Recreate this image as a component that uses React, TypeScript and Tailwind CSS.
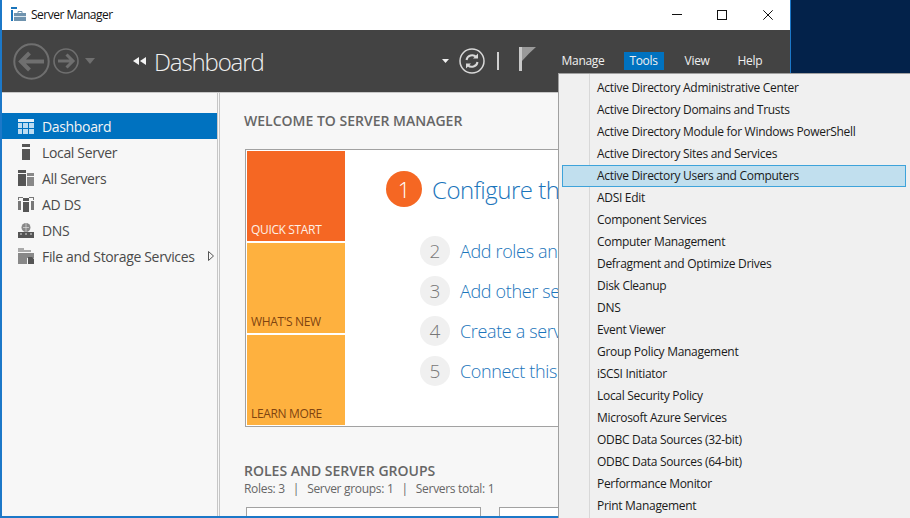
const FONT = "font-['Open_Sans',sans-serif]"

const sideItems = [
  { label: 'Dashboard', icon: <DashboardIcon />, active: true },
  { label: 'Local Server', icon: <LocalIcon /> },
  { label: 'All Servers', icon: <AllIcon /> },
  { label: 'AD DS', icon: <AdIcon /> },
  { label: 'DNS', icon: <DnsIcon /> },
  { label: 'File and Storage Services', icon: <FileIcon />, arrow: true },
]

const tiles = [
  { label: 'QUICK START', cls: 'bg-[#f56723] text-[#fdf0e6]' },
  { label: "WHAT'S NEW", cls: 'bg-[#feb13f] text-[#7f4410]' },
  { label: 'LEARN MORE', cls: 'bg-[#feb13f] text-[#7f4410]' },
]

const steps = [
  { n: 2, text: 'Add roles and features' },
  { n: 3, text: 'Add other servers to manage' },
  { n: 4, text: 'Create a server group' },
  { n: 5, text: 'Connect this server to cloud services' },
]

const tools = [
  'Active Directory Administrative Center',
  'Active Directory Domains and Trusts',
  'Active Directory Module for Windows PowerShell',
  'Active Directory Sites and Services',
  'Active Directory Users and Computers',
  'ADSI Edit',
  'Component Services',
  'Computer Management',
  'Defragment and Optimize Drives',
  'Disk Cleanup',
  'DNS',
  'Event Viewer',
  'Group Policy Management',
  'iSCSI Initiator',
  'Local Security Policy',
  'Microsoft Azure Services',
  'ODBC Data Sources (32-bit)',
  'ODBC Data Sources (64-bit)',
  'Performance Monitor',
  'Print Management',
]

export default function App() {
  return (
    <div className={`relative flex w-[910px] h-[518px] overflow-hidden bg-[#03224a] ${FONT}`}>
      <div className="flex flex-col w-[791px] h-full shrink-0 overflow-hidden border-l-2 border-r border-b-2 border-[#1c78c8] bg-white">
        <TitleBar />
        <Header />
        <div className="flex flex-1 min-h-0 bg-[#f7f7f7] border-t-[1px] border-[#c8c8c8]">
          <Sidebar />
          <Main />
        </div>
      </div>
      <ToolsMenu />
    </div>
  )
}

function TitleBar() {
  return (
    <div className="flex items-center h-[30px] shrink-0 pl-[9px] bg-white">
      <AppIcon />
      <span className="ml-[5px] text-[12px] tracking-[-0.5px] text-[#111]">Server Manager</span>
      <div className="flex items-center ml-auto pr-[17px] gap-[35px]">
        <svg width="10" height="10" viewBox="0 0 10 10"><path d="M0 4.5h10" stroke="#111" /></svg>
        <svg width="10" height="10" viewBox="0 0 10 10"><rect x=".5" y=".5" width="9" height="9" fill="none" stroke="#111" /></svg>
        <svg className="ml-px" width="10" height="10" viewBox="0 0 10 10"><path d="M.3.3l9.4 9.4M9.7.3L.3 9.7" stroke="#111" /></svg>
      </div>
    </div>
  )
}

function Header() {
  return (
    <div className="flex items-center h-[62px] shrink-0 pl-[11px] bg-[#434343] text-[#f0f0f0]">
      <svg width="37" height="37" viewBox="0 0 37 37" fill="none" stroke="#6f6f6f">
        <circle cx="18.5" cy="18.5" r="17.2" strokeWidth="2" />
        <path d="M31 18.5H8M16.5 10l-8.5 8.5 8.5 8.5" strokeWidth="4" />
      </svg>
      <svg className="ml-[3px]" width="26" height="26" viewBox="0 0 26 26" fill="none" stroke="#6f6f6f">
        <circle cx="13" cy="13" r="12" strokeWidth="1.6" />
        <path d="M5 13h15M13.5 6.5L20 13l-6.5 6.5" strokeWidth="3" />
      </svg>
      <svg className="ml-[6px]" width="10" height="6" viewBox="0 0 10 6"><path d="M0 0h10L5 6z" fill="#6f6f6f" /></svg>
      <svg className="ml-[38px]" width="13" height="8" viewBox="0 0 13 8" fill="#f4f4f4"><path d="M6 0v8L0 4zM13 0v8L7 4z" /></svg>
      <span className="ml-[8px] pt-[2px] text-[24px] font-light tracking-[-1.13px] leading-none">Dashboard</span>
      <svg className="ml-[178px]" width="7" height="4" viewBox="0 0 7 4"><path d="M0 0h7L3.5 4z" fill="#f0f0f0" /></svg>
      <svg className="ml-[10px]" width="26" height="26" viewBox="0 0 26 26" fill="none" stroke="#d8d8d8">
        <circle cx="13" cy="13" r="12" strokeWidth="1.5" />
        <path d="M7.5 12a5.7 5.7 0 0 1 9.8-3M18.5 14a5.7 5.7 0 0 1-9.8 3" strokeWidth="2" />
        <path d="M19 5.5v5h-5zM7 20.5v-5h5z" fill="#d8d8d8" stroke="none" />
      </svg>
      <div className="ml-[12px] w-[2px] h-[18px] bg-[#d0d0d0]" />
      <svg className="ml-[20px] -mt-[4px]" width="18" height="24" viewBox="0 0 18 24">
        <rect width="3" height="24" fill="#c8c8c8" />
        <path d="M3 0h14L10 6.5 3 14z" fill="#9a9a9a" />
      </svg>
      <div className="flex items-center ml-[25px] text-[12px] tracking-[-0.3px]">
        <span className="w-[62px]">Manage</span>
        <span className="flex items-center justify-center w-[40px] h-[18px] bg-[#0072c0]">Tools</span>
        <span className="ml-[21px] w-[53px]">View</span>
        <span>Help</span>
      </div>
    </div>
  )
}

function Sidebar() {
  return (
    <div className="w-[218px] shrink-0 pt-[20px] border-r-[3px] border-[#c6c6c6] border-double">
      {sideItems.map((item) => (
        <div
          key={item.label}
          className={`flex items-center h-[26px] pl-[16px] text-[14px] tracking-[-0.34px] ${
            item.active ? 'bg-[#0072c0] text-[#f4f4f4]' : 'text-[#4a4a4a]'
          }`}
        >
          <span className="flex items-center justify-center w-[16px] h-[17px] mr-[8px]">{item.icon}</span>
          <span className="pt-[1px]">{item.label}</span>
          {item.arrow && (
            <svg className="ml-[13px]" width="6" height="10" viewBox="0 0 6 10">
              <path d="M.5.5l5 4.5-5 4.5z" fill="none" stroke="#555" />
            </svg>
          )}
        </div>
      ))}
    </div>
  )
}

function Main() {
  return (
    <div className="flex-1 min-w-0 pt-[20px] pl-[24px] overflow-hidden">
      <h1 className="text-[14px] leading-[16px] font-semibold text-[#666]">WELCOME TO SERVER MANAGER</h1>
      {/* only the part left of the open menu ever shows, so the card stops there */}
      <div className="flex w-[320px] h-[278px] mt-[20px] ml-[1px] p-[1px] overflow-hidden bg-white border border-[#a2a2a2]">
        <div className="flex flex-col gap-[2px] w-[98px] shrink-0">
          {tiles.map((t) => (
            <div key={t.label} className={`flex items-end h-[90px] shrink-0 px-[4px] pb-[3px] text-[12px] leading-[16px] tracking-[-0.35px] ${t.cls}`}>
              {t.label}
            </div>
          ))}
        </div>
        <div className="flex-1 min-w-0 pt-[20px] pl-[41px] overflow-hidden">
          <div className="flex items-center h-[36px]">
            <span className="flex items-center justify-center w-[36px] h-[36px] shrink-0 rounded-full bg-[#f56723] text-[22px] font-light text-white">1</span>
            <span className="ml-[10px] pt-[2px] text-[24px] font-light tracking-[-0.5px] text-[#1b75bb] whitespace-nowrap">Configure this local server</span>
          </div>
          <div className="mt-[29px] ml-[34px] flex flex-col gap-[10px]">
            {steps.map((s) => (
              <div key={s.n} className="flex items-center">
                <span className="flex items-center justify-center w-[30px] h-[30px] shrink-0 rounded-full bg-[#f0f0f0] text-[19px] font-light text-[#777]">{s.n}</span>
                <span className="ml-[10px] text-[18px] font-light tracking-[-0.35px] text-[#1b75bb] whitespace-nowrap">{s.text}</span>
              </div>
            ))}
          </div>
        </div>
      </div>
      <h2 className="mt-[36px] text-[14px] leading-[16px] font-semibold text-[#666]">ROLES AND SERVER GROUPS</h2>
      <div className="flex mt-[2px] text-[12px] leading-[16px] tracking-[-0.3px] text-[#666]">
        <span>Roles: 3</span>
        <span className="mx-[8px]">|</span>
        <span>Server groups: 1</span>
        <span className="mx-[8px]">|</span>
        <span>Servers total: 1</span>
      </div>
      <div className="flex gap-[18px] mt-[10px] ml-[2px]">
        <div className="w-[235px] h-[40px] bg-white border border-[#a2a2a2]" />
        <div className="w-[60px] h-[40px] bg-white border border-[#a2a2a2]" />
      </div>
    </div>
  )
}

function ToolsMenu() {
  return (
    <div className="absolute left-[558px] top-[73px] w-[360px] h-[460px] pt-[3px] pl-[2px] bg-[#f0f0f0] border border-[#a0a0a0]">
      <div className="absolute left-[30px] top-0 bottom-0 w-px bg-[#d8d8d8]" />
      {tools.map((t) => (
        <div
          key={t}
          className={`relative flex items-center h-[22px] w-[344px] ml-[1px] pl-[35px] text-[12px] tracking-[-0.3px] text-[#1a1a1a] whitespace-nowrap ${
            t === 'Active Directory Users and Computers' ? 'bg-[#c1dfee] outline outline-1 -outline-offset-1 outline-[#3ea3da]' : ''
          }`}
        >
          {t}
        </div>
      ))}
    </div>
  )
}

function AppIcon() {
  return (
    <svg className="-mt-[2px]" width="15" height="14" viewBox="0 0 15 14">
      <path d="M0 0h6v2H0zM0 3h2v11H0z" fill="#1b75bb" />
      <path d="M3 6h12v8H3z" fill="#6f93ae" />
      <path d="M7 6V4.5h4V6" fill="none" stroke="#6f93ae" />
      <path d="M3 9.5h12" stroke="#dbe6ee" />
    </svg>
  )
}

function DashboardIcon() {
  return (
    <svg width="16" height="15" viewBox="0 0 16 15">
      <path d="M0 0h16v3H0z" fill="#e8f1f8" />
      <path d="M0 4h4v5H0zM5 4h5v5H5zM11 4h5v5h-5zM0 10h4v5H0zM5 10h5v5H5zM11 10h5v5h-5z" fill="#bcdcf2" />
    </svg>
  )
}

function LocalIcon() {
  return (
    <svg width="8" height="16" viewBox="0 0 8 16" fill="#555">
      <path d="M0 0h8v3H0zM0 5h8v11H0z" />
    </svg>
  )
}

function AllIcon() {
  return (
    <svg width="16" height="16" viewBox="0 0 16 16">
      <path d="M0 0h8v3H0zM0 4h8v12H0z" fill="#555" />
      <path d="M9 3h7v3H9zM9 7h7v9H9z" fill="#888" />
    </svg>
  )
}

function AdIcon() {
  return (
    <svg width="16" height="15" viewBox="0 0 16 15" fill="#777">
      <path d="M0 0h5v1H1v2H0zM11 0h5v3h-1V1h-4zM0 4h3v9H0zM13 4h3v9h-3z" />
      <path d="M5 1h6v3H5zM5 5h6v10H5z" fill="#555" />
    </svg>
  )
}

function DnsIcon() {
  return (
    <svg width="16" height="15" viewBox="0 0 16 15">
      <circle cx="8" cy="4.5" r="4.5" fill="#888" />
      <path d="M5 4.5h6M8 0v9" stroke="#ddd" strokeWidth=".7" />
      <path d="M0 9h16v6H0z" fill="#555" />
      <path d="M2 11h2M7 11h2M12 11h2" stroke="#ddd" />
    </svg>
  )
}

function FileIcon() {
  return (
    <svg width="16" height="16" viewBox="0 0 16 16">
      <path d="M0 0h6v2h7v2H0z" fill="#aaa" />
      <path d="M0 5h16v5H9v6H0z" fill="#888" />
      <path d="M10 9h4l2 2v5h-6z" fill="#555" />
    </svg>
  )
}
